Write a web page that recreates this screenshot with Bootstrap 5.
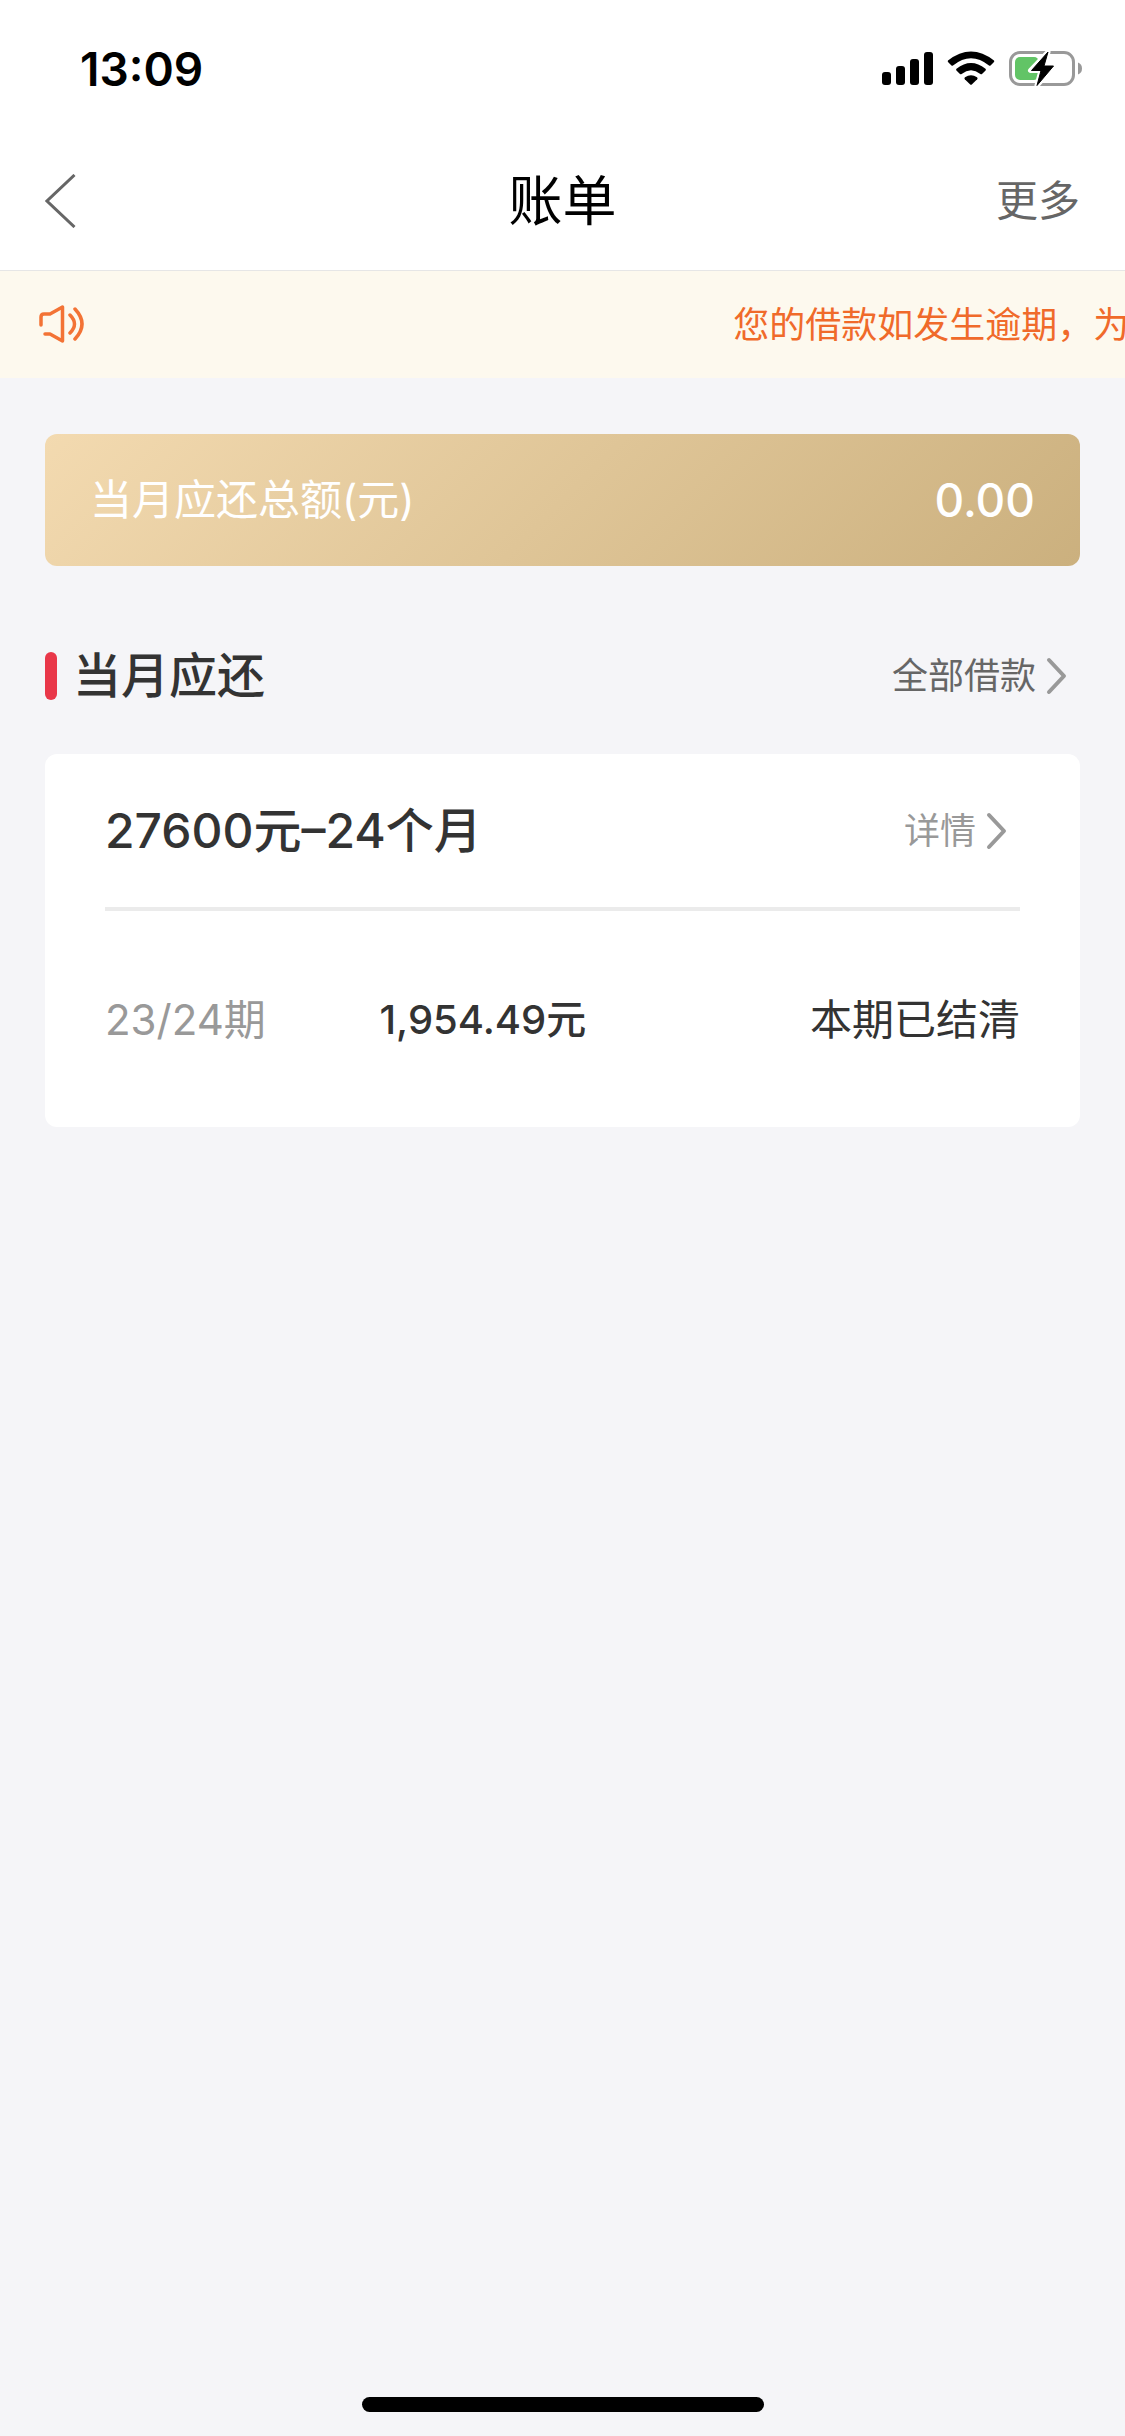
<!DOCTYPE html>
<html lang="zh-CN">
<head>
<meta charset="utf-8">
<meta name="viewport" content="width=device-width, initial-scale=1">
<title>账单</title>
<link rel="stylesheet" href="https://cdn.jsdelivr.net/npm/bootstrap@5.3.0/dist/css/bootstrap.min.css">
<style>
  body { font-family: Inter, "Noto Sans CJK SC", sans-serif; background: #f5f5f8; color: #333; font-size: 42px; line-height: 60px; }
  a, a:hover { color: inherit; text-decoration: none; }
  svg { display: block; flex: none; }
  .fs-s { font-size: 36px; }
  .fs-l { font-size: 48px; }
  .fs-sum { font-size: 46px; }
  .ink-mid { color: #666; }
  .ink-soft { color: #999; }
  .status-bar { height: 132px; padding: 6px 42px 0 80px; }
  .title-bar { height: 139px; padding: 0 45px; border-bottom: 1px solid #e6e6e6; }
  .title-bar h1 { font-size: 54px; padding-top: 2px; }
  .notice { height: 107px; padding-left: 38px; gap: 6px; background: #fdf9ee; color: #f06a2a; }
  .notice svg { margin-bottom: 2px; }
  .notice-text { padding-left: 59%; }
  .page-body { padding: 56px 45px; }
  .total { height: 132px; padding: 0 45px; border-radius: 12px; background: linear-gradient(135deg, #f3dab0, #cbb07e); }
  .section-head { height: 188px; padding: 32px 12px 0 0; }
  .accent { width: 12px; height: 48px; border-radius: 6px; background: #e93749; margin-right: 16px; }
  .loan { border-radius: 12px; padding: 0 60px; }
  .loan-head { height: 157px; padding: 0 12px 0 0; border-bottom: 4px solid #ebebeb; }
  .loan-row { height: 216px; padding-top: 2px; }
  .term { width: 30%; }
  .amount { font-size: 40px; }
  .home-bar { width: 402px; height: 15px; margin-bottom: 24px; }
</style>
</head>
<body>
<div class="d-flex flex-column min-vh-100">
  <header class="bg-white">
    <div class="status-bar d-flex align-items-center justify-content-between text-black">
      <span class="fs-sum fw-semibold">13:09</span>
      <svg width="202" height="36" viewBox="0 0 202 36" role="img" aria-label="信号、无线网络、电池充电中">
        <rect x="1" y="21" width="9" height="13" rx="3"/>
        <rect x="15" y="15" width="9" height="19" rx="3"/>
        <rect x="29" y="8" width="9" height="26" rx="3"/>
        <rect x="43" y="1" width="9" height="33" rx="3"/>
        <path d="M67 9.500Q90 -8.500 113 9.500Q113.500 10.300 113 11L109.500 14.500Q108.700 15 108 14.500Q90 0 72 14.500Q71.300 15 70.500 14.500L67 11Q66.500 10.300 67 9.500Z"/>
        <path d="M75.500 17.800Q90 6 104.500 17.800Q105.300 18.600 104.600 19.400L101 22.900Q100.200 23.500 99.400 22.900Q90 15.500 80.600 22.900Q79.800 23.500 79 22.900L75.400 19.400Q74.700 18.600 75.500 17.800Z"/>
        <path d="M84 26.300Q90 22 96 26.300Q97.200 27.200 96.200 28.200L90.800 33.500Q90 34.200 89.200 33.500L83.800 28.200Q82.800 27.200 84 26.300Z"/>
        <rect x="129.500" y="1.500" width="63" height="32" rx="9.500" fill="none" stroke="#999" stroke-width="3"/>
        <path d="M197 11.500Q201 13 201 17.500T197 23.500Z" fill="#999"/>
        <rect x="134" y="6" width="24" height="23" rx="5" fill="#62c466"/>
        <path d="M167 1L149.500 19.500H160L156 34.500L173.500 15H163L167 1Z" stroke="#fff" stroke-width="5" stroke-linejoin="round"/>
        <path d="M167 1L150.500 19.500H160L156 34.500L172.500 15H163L167 1Z" stroke="#000" stroke-width="1" stroke-linejoin="round"/>
      </svg>
    </div>
    <nav class="title-bar d-flex align-items-center">
      <div class="col d-flex">
        <a href="#" aria-label="返回">
          <svg width="32" height="54" viewBox="0 0 32 54" fill="none" stroke="#666" stroke-width="3"><path d="M29.500 1L2 27L29.500 53"/></svg>
        </a>
      </div>
      <h1 class="m-0 fw-normal text-black">账单</h1>
      <div class="col text-end"><a href="#" class="ink-mid">更多</a></div>
    </nav>
  </header>

  <div class="notice d-flex align-items-center overflow-hidden">
    <svg width="48" height="38" viewBox="0 0 48 38" fill="none" stroke="#f37335" stroke-width="3.500" stroke-linecap="round" stroke-linejoin="round">
      <path d="M3 20V12Q3 9 6 9H12L24.500 2V36L12 29H7"/>
      <path d="M32 10Q41 19 32 28M37 4Q51 19 37 34"/>
    </svg>
    <div class="notice-text fs-s flex-grow-1 overflow-hidden text-nowrap">您的借款如发生逾期，为</div>
  </div>

  <main class="page-body">
    <section class="total d-flex align-items-center justify-content-between text-white">
      <span>当月应还总额(元)</span>
      <span class="fs-sum fw-medium">0.00</span>
    </section>

    <div class="section-head d-flex align-items-center">
      <span class="accent"></span>
      <h2 class="fs-l m-0 fw-medium">当月应还</h2>
      <a href="#" class="fs-s ink-mid ms-auto d-flex align-items-center">全部借款
        <svg class="ms-2" width="24" height="38" viewBox="0 0 24 38" fill="none" stroke="#999" stroke-width="4" stroke-linecap="round" stroke-linejoin="round"><path d="M5 3L20 19L5 35"/></svg>
      </a>
    </div>

    <article class="loan bg-white">
      <div class="loan-head d-flex align-items-center justify-content-between">
        <h3 class="fs-l m-0 fw-medium">27600元–24个月</h3>
        <a href="#" class="fs-s ink-soft d-flex align-items-center">详情
          <svg class="ms-2" width="24" height="38" viewBox="0 0 24 38" fill="none" stroke="#999" stroke-width="4" stroke-linecap="round" stroke-linejoin="round"><path d="M5 3L20 19L5 35"/></svg>
        </a>
      </div>
      <div class="loan-row d-flex align-items-center">
        <span class="term ink-soft">23/24期</span>
        <span class="amount fw-medium">1,954.49元</span>
        <span class="ms-auto">本期已结清</span>
      </div>
    </article>
  </main>

  <div class="home-bar bg-black rounded-pill mt-auto mx-auto"></div>
</div>
<script src="https://cdn.jsdelivr.net/npm/bootstrap@5.3.0/dist/js/bootstrap.bundle.min.js"></script>
</body>
</html>
